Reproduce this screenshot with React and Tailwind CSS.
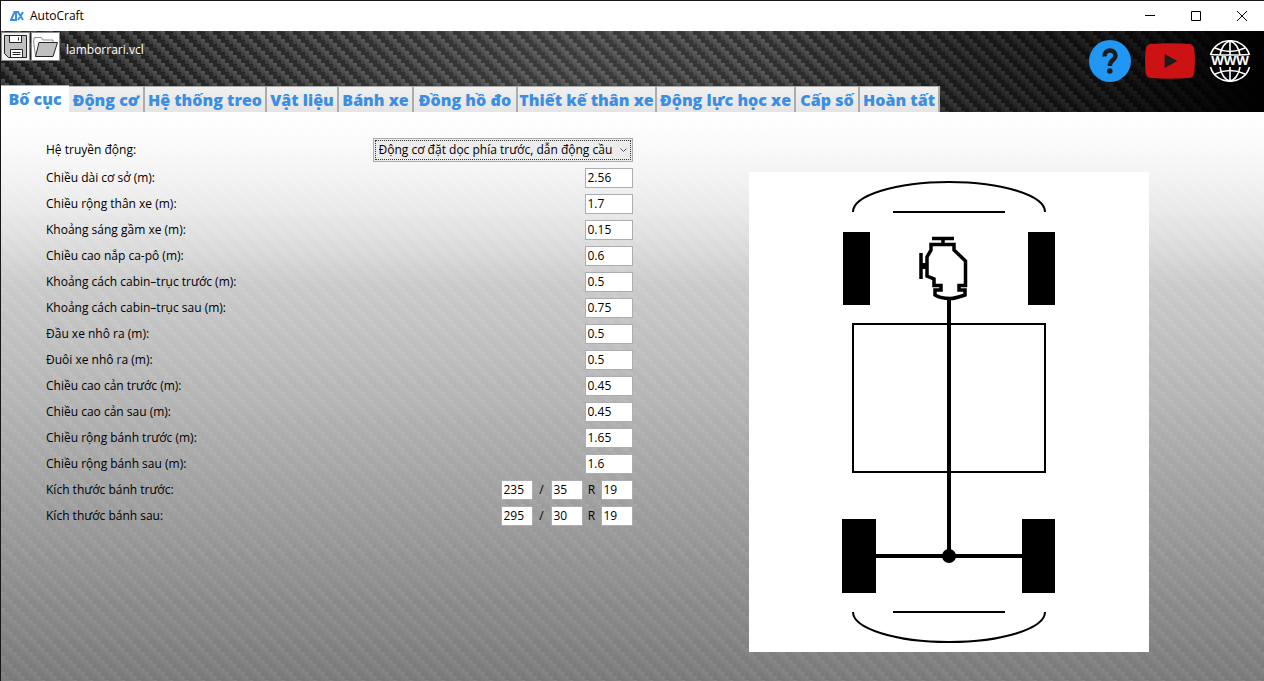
import React, { useState } from 'react';

const TABS = [
  { label: 'Bố cục', width: 'w-[68px]' },
  { label: 'Động cơ', width: 'w-[76px]' },
  { label: 'Hệ thống treo', width: 'w-[122px]' },
  { label: 'Vật liệu', width: 'w-[72px]' },
  { label: 'Bánh xe', width: 'w-[75px]' },
  { label: 'Đồng hồ đo', width: 'w-[104px]' },
  { label: 'Thiết kế thân xe', width: 'w-[139px]' },
  { label: 'Động lực học xe', width: 'w-[139px]' },
  { label: 'Cấp số', width: 'w-[64px]' },
  { label: 'Hoàn tất', width: 'w-[80px]' },
];

const DIMENSIONS = [
  { id: 'wheelbase', label: 'Chiều dài cơ sở (m):', value: '2.56' },
  { id: 'bodyWidth', label: 'Chiều rộng thân xe (m):', value: '1.7' },
  { id: 'clearance', label: 'Khoảng sáng gầm xe (m):', value: '0.15' },
  { id: 'hoodHeight', label: 'Chiều cao nắp ca-pô (m):', value: '0.6' },
  { id: 'cabinFront', label: 'Khoảng cách cabin–trục trước (m):', value: '0.5' },
  { id: 'cabinRear', label: 'Khoảng cách cabin–trục sau (m):', value: '0.75' },
  { id: 'overhangFront', label: 'Đầu xe nhô ra (m):', value: '0.5' },
  { id: 'overhangRear', label: 'Đuôi xe nhô ra (m):', value: '0.5' },
  { id: 'bumperFront', label: 'Chiều cao cản trước (m):', value: '0.45' },
  { id: 'bumperRear', label: 'Chiều cao cản sau (m):', value: '0.45' },
  { id: 'trackFront', label: 'Chiều rộng bánh trước (m):', value: '1.65' },
  { id: 'trackRear', label: 'Chiều rộng bánh sau (m):', value: '1.6' },
];

const TYRES = [
  { id: 'tyreFront', label: 'Kích thước bánh trước:', size: ['235', '35', '19'] },
  { id: 'tyreRear', label: 'Kích thước bánh sau:', size: ['295', '30', '19'] },
];

// Woven carbon fibre, four columns stepping down a 16px tile
const CarbonTexture = ({ id, className }) => (
  <svg className={className} aria-hidden="true">
    <defs>
      <linearGradient id={`${id}-strand`} x1="0" y1="0" x2="0" y2="1">
        <stop offset="0" stopColor="#fff" stopOpacity="0.22" />
        <stop offset="1" stopColor="#fff" stopOpacity="0.06" />
      </linearGradient>
      <pattern id={id} width="16" height="16" patternUnits="userSpaceOnUse">
        <rect width="16" height="16" fill="#000" fillOpacity="0.25" />
        {[0, 4, 8, 12].map((step) => (
          <g key={step} fill={`url(#${id}-strand)`}>
            <rect x={step} y={step} width="4" height="9" />
            <rect x={step} y={step - 16} width="4" height="9" />
          </g>
        ))}
      </pattern>
    </defs>
    <rect width="100%" height="100%" fill={`url(#${id})`} />
  </svg>
);

const TitleBar = () => (
  <div className="flex h-[30px] items-center bg-white">
    <svg className="ml-[9px]" width="14" height="10" viewBox="0 0 14 10" fill="none" stroke="#3a8ee6" strokeWidth="2">
      <path d="M4.500 1L1 9h5V1zM6 1h2l5 8M13 1L8 9" />
    </svg>
    <h1 className="ml-[6px] text-[12px] leading-[16px]">AutoCraft</h1>
    <div className="ml-auto flex">
      <button aria-label="Minimize" className="flex h-[30px] w-[46px] items-center justify-center">
        <svg width="10" height="10" stroke="#000"><path d="M0 4.500h10" /></svg>
      </button>
      <button aria-label="Maximize" className="flex h-[30px] w-[46px] items-center justify-center">
        <svg width="10" height="10" fill="none" stroke="#000"><path d="M.5.5h9v9h-9z" /></svg>
      </button>
      <button aria-label="Close" className="flex h-[30px] w-[45px] items-center justify-center">
        <svg width="10" height="10" stroke="#000"><path d="M0 0l10 10M10 0L0 10" /></svg>
      </button>
    </div>
  </div>
);

const FileButtons = () => (
  <div className="flex gap-[1px]">
    <button aria-label="Save" className="flex h-[29px] w-[29px] items-center justify-center border border-[#8a8a8a] bg-[#f0f0f0]">
      <svg width="23" height="23" viewBox="0 0 23 23" fill="#c0c0c0" stroke="#222">
        <path d="M.5.5h22v22H4.500L.5 18.500z" />
        <path d="M5.500.5h12v7h-12zM6.500 14.500h12v8h-12z" fill="#fff" />
        <path d="M14.500 2.500v3M8.500 17.500h8M8.500 19.500h8" />
      </svg>
    </button>
    <button aria-label="Open" className="flex h-[29px] w-[29px] items-center justify-center border border-[#8a8a8a] bg-white">
      <svg width="25" height="21" viewBox="0 0 25 21" fill="#fff" stroke="#222">
        <path d="M2.500 20L.5 5l1-3.500h7L10 4h10v3" stroke="#888" />
        <path d="M6 6.500h18.500L20 20.500H2.500z" fill="#c0c0c0" />
      </svg>
    </button>
  </div>
);

const HeaderLinks = () => (
  <nav className="flex items-center gap-[14px]">
    <a href="#help" aria-label="Help">
      <svg width="42" height="42" viewBox="0 0 42 42" fill="none">
        <circle cx="21" cy="21" r="21" fill="#2196f3" />
        <path d="M15.500 16.500C15 8.500 26.500 9 26.500 15.500C26.500 20 20.800 20 20.800 26" stroke="#1c1c1c" strokeWidth="4.500" />
        <circle cx="20.800" cy="31" r="2.800" fill="#1c1c1c" />
      </svg>
    </a>
    <a href="#video" aria-label="YouTube">
      <svg width="50" height="36" viewBox="0 0 51 36" preserveAspectRatio="none">
        <path d="M6 1Q25 -.6 45 1Q50 1.500 50.400 7Q51.400 18 50.400 29Q50 34.500 45 35Q25 36.600 6 35Q1 34.500.6 29Q-.4 18 .6 7Q1 1.500 6 1z" fill="#cc1212" />
        <path d="M20 11v14l13-7z" fill="#1c1c1c" />
      </svg>
    </a>
    <a href="#web" aria-label="Website">
      <svg width="42" height="42" viewBox="0 0 42 42" fill="none" stroke="#fff" strokeWidth="1.600">
        <path d="M1.500 15C7-4 35-4 40.500 15M1.500 27C7 46 35 46 40.500 27" />
        <path d="M21 0v15M21 27v15M11 15C12 8 16 2 21 1C26 2 30 8 31 15M11 27C12 34 16 40 21 41C26 40 30 34 31 27" />
        <path d="M6 8Q21 15 36 8M6 34Q21 27 36 34M2 14.500Q21 15.500 40 14.500" />
        <text x="21" y="25" textAnchor="middle" fill="#fff" stroke="none" fontSize="13" fontWeight="700" fontFamily="Open Sans, sans-serif">WWW</text>
      </svg>
    </a>
  </nav>
);

const ChassisDiagram = () => (
  <svg width="400" height="480" viewBox="0 0 400 480" className="bg-white" fill="none" stroke="#000" strokeWidth="2">
    <path d="M104 40A96 30 0 0 1 296 40M144 40H256" />
    <path d="M104 440A96 30 0 0 0 296 440M144 440H256" />
    <rect x="104" y="152" width="192" height="148" />

    {/* Wheels */}
    <g fill="#000" stroke="none">
      <rect x="94" y="60" width="27" height="73" />
      <rect x="279" y="60" width="27" height="73" />
      <rect x="93" y="347" width="34" height="74" />
      <rect x="273" y="347" width="33" height="74" />
    </g>

    {/* Engine */}
    <g strokeWidth="3.500">
      <path d="M183 66.500h22M194 66v6M172 81v26" />
      <path d="M172 94h6" strokeWidth="6" />
      <path d="M182 72.500H205V78L216.500 89V113.500H210V118H216V123Q206 126.500 201 126.500Q192 126.500 186 123V118H192V113.500H185V107L178 104V85L182 78z" />
    </g>

    {/* Drive shaft and rear axle */}
    <path d="M200 126V384M127 384H273" strokeWidth="4" />
    <circle cx="200" cy="384" r="7" fill="#000" stroke="none" />
  </svg>
);

const NumberBox = ({ id, value, label, className }) => (
  <input
    id={id}
    aria-label={label}
    defaultValue={value}
    className={`h-[20px] border border-[#abadb3] bg-white px-[2px] pb-[2px] text-[12px] leading-[16px] ${className}`}
  />
);

const LayoutForm = () => (
  <form className="pt-[26px] pl-[45px] text-[12px] leading-[16px]">
    <div className="mb-[3px] flex h-[24px] items-center justify-between">
      <label htmlFor="drivetrain">Hệ truyền động:</label>
      <div className="relative w-[260px] border border-[#acacac] bg-[#ececec] p-[1px]">
        <select
          id="drivetrain"
          className="block h-[20px] w-full appearance-none overflow-hidden border border-dotted border-[#333] pr-[18px] pl-[3px]"
        >
          <option>Động cơ đặt dọc phía trước, dẫn động cầu sau</option>
        </select>
        <svg className="pointer-events-none absolute top-[9px] right-[5px]" width="7" height="5" fill="none" stroke="#555">
          <path d="M.5.5l3 3l3-3" />
        </svg>
      </div>
    </div>
    {DIMENSIONS.map((item) => (
      <div key={item.id} className="flex h-[26px] items-center justify-between">
        <label htmlFor={item.id}>{item.label}</label>
        <NumberBox id={item.id} value={item.value} className="w-[48px]" />
      </div>
    ))}
    {TYRES.map((item) => (
      <div key={item.id} className="flex h-[26px] items-center justify-between">
        <label htmlFor={item.id}>{item.label}</label>
        <div className="flex items-center">
          <NumberBox id={item.id} value={item.size[0]} className="w-[32px]" />
          <span className="w-[18px] text-center">/</span>
          <NumberBox label={item.label} value={item.size[1]} className="w-[32px]" />
          <span className="w-[18px] text-center">R</span>
          <NumberBox label={item.label} value={item.size[2]} className="w-[32px]" />
        </div>
      </div>
    ))}
  </form>
);

export default function App() {
  const [activeTab, setActiveTab] = useState(0);

  return (
    <div className="flex min-h-screen flex-col border-t border-l border-[#17141a] font-['Open_Sans','Noto_Sans',sans-serif] text-black">
      <TitleBar />

      <header className="relative isolate flex h-[81px] flex-col justify-between bg-linear-to-r from-[#262626] via-[#505050] via-45% to-[#202020]">
        <CarbonTexture id="carbon-header" className="absolute inset-0 -z-20 h-full w-full" />
        <div className="absolute inset-0 -z-10 bg-linear-to-r from-transparent from-60% via-black/50 via-85% to-black" />
        <div className="flex h-[54px] items-start justify-between pr-[13px]">
          <div className="flex items-center gap-[6px] pt-[1px]">
            <FileButtons />
            <span className="pt-[6px] text-[12px] leading-[16px] text-white">lamborrari.vcl</span>
          </div>
          <div className="pt-[9px]">
            <HeaderLinks />
          </div>
        </div>
        <div role="tablist" className="flex items-end">
          {TABS.map((tab, index) => (
            <button
              key={tab.label}
              role="tab"
              aria-selected={index === activeTab}
              onClick={() => setActiveTab(index)}
              className={`shrink-0 whitespace-nowrap text-[16px] leading-[22px] font-extrabold text-[#3b8ee0] ${tab.width} ${
                index === activeTab
                  ? 'h-[27px] border-t border-[#acacac] bg-white'
                  : 'h-[26px] border-t border-r-2 border-[#acacac] bg-linear-to-b from-[#f0f0f0] to-[#e5e5e5]'
              }`}
            >
              {tab.label}
            </button>
          ))}
        </div>
      </header>

      <main className="relative isolate grid flex-1 grid-cols-2 bg-linear-to-b from-white via-[#c4c4c4] via-50% to-[#848484]">
        <CarbonTexture id="carbon-body" className="absolute inset-0 -z-20 h-full w-full opacity-30" />
        <div className="absolute inset-0 -z-10 bg-linear-to-b from-white to-transparent to-30%" />
        <LayoutForm />
        <div className="flex justify-center pt-[60px] pb-[29px] pl-[2px]">
          <div>
            <ChassisDiagram />
          </div>
        </div>
      </main>
    </div>
  );
}
